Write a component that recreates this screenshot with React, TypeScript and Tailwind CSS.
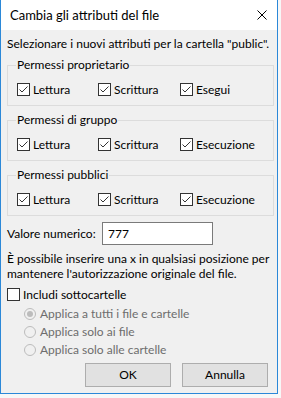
import React from "react";

const font = { fontFamily: 'Lato, "Noto Sans", sans-serif' };

function Check({ checked }: { checked: boolean }) {
  return (
    <span className="w-[13px] h-[13px] border border-[#333333] bg-white flex items-center justify-center shrink-0">
      {checked && (
        <svg width="11" height="11" viewBox="0 0 11 11">
          <polyline points="1.5,5.5 4,8 9.5,2.5" fill="none" stroke="#333333" strokeWidth="1" />
        </svg>
      )}
    </span>
  );
}

function Radio({ selected }: { selected: boolean }) {
  return (
    <span className="w-[12px] h-[12px] rounded-full border border-[#bcbcbc] bg-[#f0f0f0] flex items-center justify-center shrink-0">
      {selected && <span className="w-[6px] h-[6px] rounded-full bg-[#bcbcbc]" />}
    </span>
  );
}

function Group({ title, items }: { title: string; items: string[] }) {
  return (
    <div className="relative border border-[#dcdcdc] pl-[9px] pt-[17px] pb-[9px]">
      <span className="absolute left-[8px] top-[-9px] px-[1px] bg-[#f0f0f0] leading-[16px] text-[12px] text-black whitespace-nowrap">
        {title}
      </span>
      <div className="grid grid-cols-[81px_82px_auto] h-[13px]">
        {items.map((it) => (
          <div key={it} className="flex items-center gap-[3px] h-[13px]">
            <Check checked />
            <span className="leading-[13px] text-[12px] text-black whitespace-nowrap">{it}</span>
          </div>
        ))}
      </div>
    </div>
  );
}

export default function App() {
  return (
    <div className="w-[281px] h-[398px] bg-[#f7f7f7]" style={font}>
      <div className="w-[278px] h-[394px] border-l border-r border-b border-[#2b88d8] flex flex-col">
        <div className="h-[30px] bg-white flex items-center justify-between pl-[9px] pr-[10px]">
          <span className="text-[13px] text-black leading-[16px] whitespace-nowrap">Cambia gli attributi del file</span>
          <svg width="10" height="10" viewBox="0 0 10 10" className="mb-[1px]">
            <path d="M0.5 0.5 L9.5 9.5 M9.5 0.5 L0.5 9.5" stroke="#000" strokeWidth="1" />
          </svg>
        </div>
        <div className="flex-1 bg-[#f0f0f0] pl-[6px] pr-[3px] pt-[6px] text-[12px] text-black">
          <div className="leading-[16px] whitespace-nowrap">
            Selezionare i nuovi attributi per la cartella "public".
          </div>
          <div className="mt-[13px]">
            <Group title="Permessi proprietario" items={["Lettura", "Scrittura", "Esegui"]} />
          </div>
          <div className="mt-[14px]">
            <Group title="Permessi di gruppo" items={["Lettura", "Scrittura", "Esecuzione"]} />
          </div>
          <div className="mt-[14px]">
            <Group title="Permessi pubblici" items={["Lettura", "Scrittura", "Esecuzione"]} />
          </div>
          <div className="mt-[6px] flex items-center h-[23px]">
            <span className="w-[95px] leading-[16px] whitespace-nowrap">Valore numerico:</span>
            <div className="w-[111px] h-[23px] border border-[#7a7a7a] bg-white flex items-center pl-[5px] leading-[16px]">
              777
            </div>
          </div>
          <div className="mt-[6px] leading-[15px] whitespace-nowrap">
            È possibile inserire una x in qualsiasi posizione per
            <br />
            mantenere l'autorizzazione originale del file.
          </div>
          <div className="mt-[7px] flex items-center gap-[3px] h-[13px]">
            <Check checked={false} />
            <span className="leading-[13px] whitespace-nowrap">Includi sottocartelle</span>
          </div>
          <div className="mt-[4px] pl-[17px] flex flex-col text-[#6d6d6d]">
            {[
              ["Applica a tutti i file e cartelle", true],
              ["Applica solo ai file", false],
              ["Applica solo alle cartelle", false],
            ].map(([label, sel]) => (
              <div key={label as string} className="h-[18px] flex items-center gap-[4px]">
                <Radio selected={sel as boolean} />
                <span className="leading-[16px] whitespace-nowrap">{label as string}</span>
              </div>
            ))}
          </div>
          <div className="mt-[4px] flex gap-[11px] pl-[78px]">
            <div className="w-[86px] h-[24px] border border-[#adadad] bg-[#e1e1e1] flex items-center justify-center leading-[16px]">
              OK
            </div>
            <div className="w-[86px] h-[24px] border border-[#adadad] bg-[#e1e1e1] flex items-center justify-center leading-[16px]">
              Annulla
            </div>
          </div>
        </div>
      </div>
    </div>
  );
}
